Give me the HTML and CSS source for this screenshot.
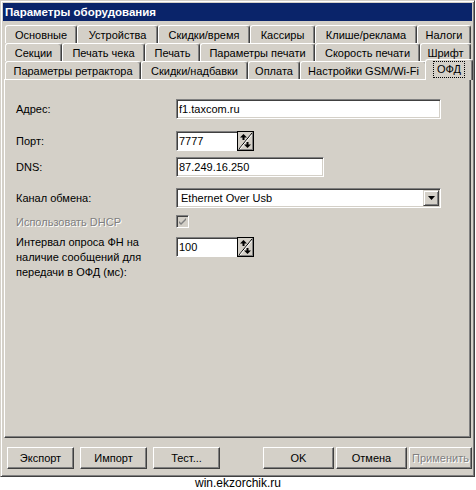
FILE: index.html
```html
<!DOCTYPE html>
<html lang="ru">
<head>
<meta charset="utf-8">
<title>Параметры оборудования</title>
<link rel="stylesheet" href="styles.css">
</head>
<body>
<div class="window">
  <div class="titlebar">Параметры оборудования</div>
  <div class="tabs">
    <div class="tabrow row1">
      <div class="tab">Основные</div>
      <div class="tab">Устройства</div>
      <div class="tab">Скидки/время</div>
      <div class="tab">Кассиры</div>
      <div class="tab">Клише/реклама</div>
      <div class="tab">Налоги</div>
    </div>
    <div class="tabrow row2">
      <div class="tab">Секции</div>
      <div class="tab">Печать чека</div>
      <div class="tab">Печать</div>
      <div class="tab">Параметры печати</div>
      <div class="tab">Скорость печати</div>
      <div class="tab">Шрифт</div>
    </div>
    <div class="tabrow row3">
      <div class="tab">Параметры ретрактора</div>
      <div class="tab">Скидки/надбавки</div>
      <div class="tab">Оплата</div>
      <div class="tab">Настройки GSM/Wi-Fi</div>
      <div class="tab selected"><span class="focus">ОФД</span></div>
    </div>
  </div>
  <div class="panel">
    <div class="form">
      <div class="lbl r-addr">Адрес:</div>
      <div class="field f-addr r-addr">f1.taxcom.ru</div>

      <div class="lbl r-port">Порт:</div>
      <div class="spinbox r-port">
        <div class="field f-spin">7777</div>
        <div class="spin">
          <svg width="13" height="16" viewBox="0 0 13 16">
            <line x1="0" y1="16" x2="13" y2="0" stroke="#000" stroke-width="1"/>
            <line x1="1" y1="16" x2="13" y2="1.5" stroke="#fff" stroke-width="1"/>
            <path d="M4.5 1 L8 4.5 L1 4.5 Z" fill="#000"/>
            <rect x="3.5" y="4" width="2" height="3" fill="#000"/>
            <path d="M8.5 15 L12 11.5 L5 11.5 Z" fill="#000"/>
            <rect x="7.5" y="9" width="2" height="3" fill="#000"/>
          </svg>
        </div>
      </div>

      <div class="lbl r-dns">DNS:</div>
      <div class="field f-dns r-dns">87.249.16.250</div>

      <div class="lbl r-chan">Канал обмена:</div>
      <div class="combo r-chan">
        <div class="combo-text">Ethernet Over Usb</div>
        <div class="dropbtn">
          <svg width="7" height="4" viewBox="0 0 7 4"><path d="M0 0H7L3.5 4Z" fill="#000"/></svg>
        </div>
      </div>

      <div class="lbl disabled r-dhcp">Использовать DHCP</div>
      <div class="checkbox r-dhcp">
        <svg width="9" height="9" viewBox="0 0 9 9"><path d="M1 4 L3 6 L8 1 L8 3 L3 8 L1 6 Z" fill="#808080"/></svg>
      </div>

      <div class="lbl multi">Интервал опроса ФН на<br>наличие сообщений для<br>передачи в ОФД (мс):</div>
      <div class="spinbox r-int">
        <div class="field f-spin">100</div>
        <div class="spin">
          <svg width="13" height="16" viewBox="0 0 13 16">
            <line x1="0" y1="16" x2="13" y2="0" stroke="#000" stroke-width="1"/>
            <line x1="1" y1="16" x2="13" y2="1.5" stroke="#fff" stroke-width="1"/>
            <path d="M4.5 1 L8 4.5 L1 4.5 Z" fill="#000"/>
            <rect x="3.5" y="4" width="2" height="3" fill="#000"/>
            <path d="M8.5 15 L12 11.5 L5 11.5 Z" fill="#000"/>
            <rect x="7.5" y="9" width="2" height="3" fill="#000"/>
          </svg>
        </div>
      </div>
    </div>
  </div>
  <div class="buttons">
    <div class="btn w67">Экспорт</div>
    <div class="btn w67">Импорт</div>
    <div class="btn w67">Тест...</div>
    <div class="btn w71 push">OK</div>
    <div class="btn w71">Отмена</div>
    <div class="btn w63 btn-disabled">Применить</div>
  </div>
</div>
<div class="watermark">win.ekzorchik.ru</div>
</body>
</html>
```

FILE: styles.css
```css
* { box-sizing: border-box; }
html, body { margin: 0; padding: 0; background: #ffffff; }
body {
  width: 476px;
  height: 490px;
  overflow: hidden;
  font-family: "Liberation Sans", Arial, sans-serif;
  font-size: 11px;
  color: #000;
}

.window {
  width: 475px;
  height: 477px;
  background: #d4d0c8;
  border: 1px solid;
  border-color: #d4d0c8 #404040 #404040 #d4d0c8;
  box-shadow: inset 1px 1px #ffffff, inset -1px -1px #808080;
  padding: 2px;
  display: flex;
  flex-direction: column;
}

.titlebar {
  height: 18px;
  line-height: 18px;
  background: #0a246a;
  color: #ffffff;
  font-weight: bold;
  font-size: 11.5px;
  padding-left: 2px;
  white-space: nowrap;
}

.tabs {
  margin-top: 4px;
  padding-left: 2px;
  display: flex;
  flex-direction: column;
}

.tabrow {
  display: grid;
  height: 18px;
}
.row1 { grid-template-columns: 72px 81px 92px 65px 102px 54px; }
.row2 { grid-template-columns: 57px 83px 55px 115px 105px 51px; }
.row3 { grid-template-columns: 136px 107px 52px 127px 44px; }

.tab {
  background: #d4d0c8;
  border-top: 1px solid #ffffff;
  border-left: 1px solid #ffffff;
  border-right: 1px solid #404040;
  box-shadow: inset -1px 0 #808080;
  border-radius: 3px 3px 0 0;
  text-align: center;
  line-height: 16px;
  white-space: nowrap;
  padding-top: 1px;
}

.tab.selected {
  position: relative;
  z-index: 1;
  margin: -2px -2px -1px -2px;
  line-height: 17px;
  padding-top: 1px;
}

.focus {
  display: inline-block;
  outline: 1px dotted #000;
  padding: 0 3px;
  line-height: 15px;
}

.panel {
  margin-left: 1px;
  width: 467px;
  height: 359px;
  border: 1px solid;
  border-color: #ffffff #404040 #404040 #ffffff;
  box-shadow: inset -1px -1px #808080;
  padding: 19px 0 0 11px;
}

.form {
  display: grid;
  grid-template-columns: 160px 265px;
  align-items: center;
}

.lbl { white-space: nowrap; }
.lbl.disabled { color: #808080; text-shadow: 1px 1px #ffffff; }
.lbl.multi { align-self: start; line-height: 15px; margin-top: 7px; }

.r-port { margin-top: 12px; }
.r-dns { margin-top: 6px; }
.r-chan { margin-top: 11px; }
.r-dhcp { margin-top: 7px; }
.r-int { margin-top: 9px; align-self: start; }

.field {
  height: 20px;
  background: #ffffff;
  border: 1px solid;
  border-color: #808080 #ffffff #ffffff #808080;
  box-shadow: inset 1px 1px #404040, inset -1px -1px #d4d0c8;
  padding: 0 0 0 2px;
  line-height: 18px;
  white-space: nowrap;
}
.f-addr { width: 265px; }
.f-dns { width: 148px; }

.spinbox {
  display: flex;
  width: 78px;
  height: 20px;
}
.f-spin { width: 61px; border-right: none; box-shadow: inset 1px 1px #404040; }
.spin {
  width: 17px;
  height: 20px;
  background: #d4d0c8;
  border: 1px solid;
  border-color: #ffffff #404040 #404040 #ffffff;
  box-shadow: inset -1px -1px #808080;
  display: flex;
  align-items: center;
  justify-content: center;
  outline: 1px solid #000;
  outline-offset: -1px;
}
.spin svg { display: block; }

.combo {
  width: 265px;
  height: 20px;
  background: #ffffff;
  border: 1px solid;
  border-color: #808080 #ffffff #ffffff #808080;
  box-shadow: inset 1px 1px #404040, inset -1px -1px #d4d0c8;
  display: flex;
  padding: 1px;
}
.combo-text { flex: 1; line-height: 16px; padding-left: 3px; }
.dropbtn {
  width: 16px;
  height: 16px;
  background: #d4d0c8;
  border: 1px solid;
  border-color: #d4d0c8 #404040 #404040 #d4d0c8;
  box-shadow: inset 1px 1px #ffffff, inset -1px -1px #808080;
  display: flex;
  align-items: center;
  justify-content: center;
}
.dropbtn svg { display: block; }

.checkbox {
  width: 13px;
  height: 13px;
  background: #d4d0c8;
  border: 1px solid;
  border-color: #808080 #ffffff #ffffff #808080;
  box-shadow: inset 1px 1px #404040, inset -1px -1px #d4d0c8;
  display: flex;
  align-items: center;
  justify-content: center;
}
.checkbox svg { display: block; }

.buttons {
  margin-top: 9px;
  display: flex;
  padding-left: 4px;
  gap: 6px;
}
.btn {
  height: 22px;
  line-height: 20px;
  text-align: center;
  background: #d4d0c8;
  border: 1px solid;
  border-color: #ffffff #404040 #404040 #ffffff;
  box-shadow: inset -1px -1px #808080;
  white-space: nowrap;
}
.w67 { width: 67px; }
.w71 { width: 71px; }
.w63 { width: 63px; }
.push { margin-left: 37px; }
.btn.w71 + .btn { margin-left: -4px; }
.btn-disabled { color: #808080; text-shadow: 1px 1px #ffffff; }

.watermark {
  text-align: center;
  font-family: "Liberation Sans", Arial, sans-serif;
  font-size: 12px;
  line-height: 13px;
  color: #000;
}
```
